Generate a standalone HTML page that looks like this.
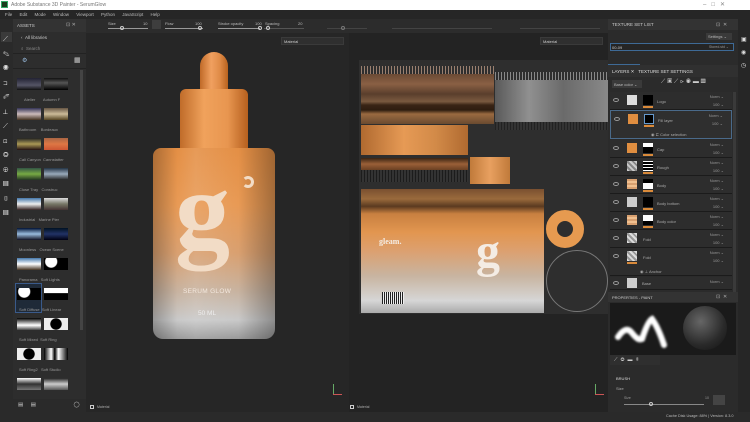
<!DOCTYPE html>
<html><head><meta charset="utf-8"><style>
*{margin:0;padding:0;box-sizing:border-box}
body{width:750px;height:422px;overflow:hidden;background:#1e1e1e;font-family:"Liberation Sans",sans-serif;font-size:5px;color:#bbb;position:relative}
.a{position:absolute}
.t{white-space:nowrap}
.lay{position:absolute;left:610px;width:122px;height:18px;border-bottom:1px solid #1b1b1b;background:#2d2d2d}
.lay .th{position:absolute;left:17px;top:3px;width:10px;height:10px}
.lay .mk{position:absolute;left:33px;top:3px;width:10px;height:10px;background:#000}
.lay .ob{position:absolute;left:33px;top:14px;width:10px;height:2px;background:#d98a3a}
.lay .eye{position:absolute;left:3px;top:6px;width:6px;height:4px;border:1px solid #999;border-radius:50%}
.lay .n{position:absolute;left:47px;top:7px;font-size:4px;color:#aaa}
.lay .nr{position:absolute;right:8px;top:2px;font-size:4px;color:#999}
.lay .nr2{position:absolute;right:8px;top:10px;font-size:4px;color:#999}
.asrow{position:absolute;left:17px;width:60px;height:12px}
.asrow div{position:absolute;top:0;width:24px;height:12px}
.lbl{position:absolute;font-size:4px;color:#999}
</style></head><body>
<!-- title bar -->
<div class="a" style="left:0;top:0;width:750px;height:10px;background:#fff"></div>
<div class="a" style="left:1px;top:1px;width:7px;height:7px;background:#1b3a1b;border:1px solid #3a6"></div>
<div class="a t" style="left:11px;top:2px;color:#777;font-size:5px">Adobe Substance 3D Painter - SerumGlow</div>
<div class="a t" style="left:703px;top:1px;color:#888;font-size:6px">–&nbsp;&nbsp;&nbsp;□&nbsp;&nbsp;&nbsp;✕</div>
<!-- menu -->
<div class="a" style="left:0;top:10px;width:750px;height:9px;background:#262626"></div>
<div class="a t" style="left:5px;top:12px;color:#bbb;font-size:4.5px;word-spacing:6px">File Edit Mode Window Viewport Python JavaScript Help</div>
<!-- toolbar -->
<div class="a" style="left:86px;top:19px;width:664px;height:14px;background:#2c2c2c"></div>
<div class="a" style="left:108px;top:28px;width:40px;height:1px;background:#999"></div>
<div class="a" style="left:120px;top:26px;width:4px;height:4px;border:1px solid #ccc;border-radius:50%"></div>
<div class="a t" style="left:108px;top:21px;font-size:4px">Size</div><div class="a t" style="left:143px;top:21px;font-size:4px">10</div>
<div class="a" style="left:152px;top:20px;width:9px;height:9px;background:#3e3e3e"></div>
<div class="a" style="left:165px;top:28px;width:38px;height:1px;background:#999"></div>
<div class="a" style="left:198px;top:26px;width:4px;height:4px;border:1px solid #ccc;border-radius:50%"></div>
<div class="a t" style="left:165px;top:21px;font-size:4px">Flow</div><div class="a t" style="left:195px;top:21px;font-size:4px">100</div>
<div class="a" style="left:218px;top:28px;width:42px;height:1px;background:#999"></div>
<div class="a" style="left:258px;top:26px;width:4px;height:4px;border:1px solid #ccc;border-radius:50%"></div>
<div class="a t" style="left:218px;top:21px;font-size:4px">Stroke opacity</div><div class="a t" style="left:255px;top:21px;font-size:4px">100</div>
<div class="a" style="left:264px;top:28px;width:40px;height:1px;background:#555"></div>
<div class="a" style="left:266px;top:26px;width:4px;height:4px;border:1px solid #ccc;border-radius:50%"></div>
<div class="a t" style="left:265px;top:21px;font-size:4px">Spacing</div><div class="a t" style="left:298px;top:21px;font-size:4px">20</div>
<div class="a" style="left:327px;top:28px;width:40px;height:1px;background:#444"></div>
<div class="a" style="left:341px;top:26px;width:4px;height:4px;border:1px solid #777;border-radius:50%"></div>
<div class="a" style="left:392px;top:28px;width:100px;height:1px;background:#444"></div>
<div class="a" style="left:520px;top:28px;width:80px;height:1px;background:#444"></div>
<!-- left toolstrip -->
<div class="a" style="left:0;top:19px;width:13px;height:393px;background:#2a2a2a"></div>
<div class="a" style="left:1px;top:32px;width:11px;height:10px;background:#3a3a3a"></div>
<div class="a t" style="left:3px;top:33px;color:#ddd;font-size:7px;line-height:14.5px;width:8px;white-space:normal">⟋ ✎ ◉ ⊐ ✐ ⊥ ⟋ ⊡ ◎ ⊕ ▤ ▯ ▤</div>
<!-- assets panel -->
<div class="a" style="left:13px;top:19px;width:73px;height:393px;background:#2d2d2d"></div>
<div class="a" style="left:13px;top:19px;width:73px;height:13px;background:#333"></div>
<div class="a t" style="left:17px;top:23px;color:#ccc;font-size:4.5px">ASSETS</div>
<div class="a t" style="left:66px;top:22px;color:#aaa;font-size:5px">⊡ ✕</div>
<div class="a t" style="left:21px;top:35px;color:#ccc;font-size:4.5px">‹&nbsp;&nbsp;All libraries</div>
<div class="a t" style="left:21px;top:46px;color:#888;font-size:4.5px">⌕&nbsp; Search</div>
<div class="a" style="left:13px;top:53px;width:73px;height:1px;background:#222"></div>
<div class="a t" style="left:22px;top:57px;color:#9bd;font-size:6px">⚙</div>
<div class="a t" style="left:74px;top:56px;color:#ccc;font-size:7px">▦</div>
<div class="a" style="left:13px;top:68px;width:73px;height:1px;background:#222"></div>
<div class="a" style="left:80px;top:70px;width:3px;height:260px;background:#444"></div>
<div class="asrow" style="top:78px"><div style="left:0;background:linear-gradient(#223,#556 60%,#111)"></div><div style="left:27px;background:linear-gradient(#111,#555 40%,#000)"></div></div>
<div class="lbl t" style="left:24px;top:97px">Atelier&nbsp;&nbsp;&nbsp;&nbsp;&nbsp;&nbsp; Autumn F</div>
<div class="asrow" style="top:108px"><div style="left:0;background:linear-gradient(#335,#cbb 50%,#432)"></div><div style="left:27px;background:linear-gradient(#654,#cb9 50%,#542)"></div></div>
<div class="lbl t" style="left:19px;top:127px">Bathroom&nbsp;&nbsp;&nbsp;&nbsp;Bordeaux</div>
<div class="asrow" style="top:138px"><div style="left:0;background:linear-gradient(#222,#a95 50%,#211)"></div><div style="left:27px;background:linear-gradient(#a64,#d74 50%,#c53)"></div></div>
<div class="lbl t" style="left:19px;top:157px">Cali Canyon&nbsp;&nbsp;Cannstatter</div>
<div class="asrow" style="top:168px"><div style="left:0;background:linear-gradient(#354,#7a4 50%,#232)"></div><div style="left:27px;background:linear-gradient(#234,#9ab 50%,#222)"></div></div>
<div class="lbl t" style="left:19px;top:187px">Close Tray&nbsp;&nbsp;&nbsp;Construc</div>
<div class="asrow" style="top:198px"><div style="left:0;background:linear-gradient(#47a,#eee 50%,#322)"></div><div style="left:27px;background:linear-gradient(#ddd,#776 50%,#433)"></div></div>
<div class="lbl t" style="left:19px;top:217px">Industrial&nbsp;&nbsp;&nbsp;Marine Pier</div>
<div class="asrow" style="top:228px"><div style="left:0;background:linear-gradient(#013,#9bd 50%,#112)"></div><div style="left:27px;background:linear-gradient(#012,#236 50%,#001)"></div></div>
<div class="lbl t" style="left:19px;top:247px">Moonless&nbsp;&nbsp;&nbsp;Ocean Scene</div>
<div class="asrow" style="top:258px"><div style="left:0;background:linear-gradient(#47a,#fff 50%,#432)"></div><div style="left:27px;background:radial-gradient(circle at 30% 30%,#fff 30%,#000 35%)"></div></div>
<div class="lbl t" style="left:19px;top:277px">Panorama&nbsp;&nbsp;&nbsp;Soft Lights</div>
<div class="a" style="left:15px;top:283px;width:27px;height:30px;border:1px solid #3a5a8a;background:#1f2a38"></div>
<div class="asrow" style="top:288px"><div style="left:0;background:radial-gradient(circle at 30% 30%,#fff 30%,#000 35%)"></div><div style="left:27px;background:linear-gradient(#fff 40%,#000 45%)"></div></div>
<div class="lbl t" style="left:19px;top:307px">Soft Diffuse&nbsp;&nbsp;Soft Linear</div>
<div class="asrow" style="top:318px"><div style="left:0;background:linear-gradient(#000,#fff 60%,#444)"></div><div style="left:27px;background:radial-gradient(circle,#000 40%,#eee 45%)"></div></div>
<div class="lbl t" style="left:19px;top:337px">Soft Mixed&nbsp;&nbsp;Soft Ring</div>
<div class="asrow" style="top:348px"><div style="left:0;background:radial-gradient(circle,#000 40%,#eee 45%)"></div><div style="left:27px;background:linear-gradient(90deg,#000,#fff 30%,#000 45%,#fff 60%,#000)"></div></div>
<div class="lbl t" style="left:19px;top:367px">Soft Ring2&nbsp;&nbsp;&nbsp;Soft Studio</div>
<div class="asrow" style="top:378px"><div style="left:0;background:linear-gradient(#fff,#333 50%,#777)"></div><div style="left:27px;background:linear-gradient(#222,#ccc 50%,#555)"></div></div>
<div class="a" style="left:13px;top:399px;width:73px;height:13px;background:#2a2a2a"></div>
<div class="a t" style="left:18px;top:402px;color:#ccc;font-size:5.5px;word-spacing:6px">▤ ▤ &nbsp;&nbsp;&nbsp;&nbsp;◯ ▭ +</div>
<!-- 3D viewport -->
<div class="a" style="left:86px;top:33px;width:263px;height:379px;background:#262626"></div>
<div class="a" style="left:281px;top:37px;width:63px;height:8px;background:#2f2f2f;border:1px solid #3a3a3a"></div>
<div class="a t" style="left:284px;top:39px;font-size:4px;color:#ccc">Material</div>
<!-- bottle -->
<div class="a" style="left:200px;top:52px;width:28px;height:40px;border-radius:14px 14px 0 0;background:linear-gradient(90deg,#c06a28,#f0a060 40%,#e08c48 70%,#b8621e)"></div>
<div class="a" style="left:180px;top:89px;width:68px;height:60px;border-radius:6px 6px 0 0;background:linear-gradient(90deg,#c06c2a,#f0a25c 35%,#e89650 70%,#b6601e)"></div>
<div class="a" style="left:153px;top:148px;width:122px;height:191px;border-radius:8px 8px 10px 10px;background:linear-gradient(90deg,rgba(0,0,0,.25),rgba(255,255,255,0) 20%,rgba(255,255,255,.1) 35%,rgba(0,0,0,0) 70%,rgba(0,0,0,.3)),linear-gradient(#e48f45,#e89a55 30%,#d9a070 55%,#c8b3a0 75%,#c9c9c9 90%,#9a9a9a)"></div>
<div class="a" style="left:175px;top:170px;font-family:'Liberation Serif',serif;font-weight:bold;font-size:110px;line-height:80px;color:#f2dcc6">g</div>
<div class="a" style="left:242px;top:176px;width:12px;height:12px;border-radius:50%;border:3px solid #f2dcc6;border-left-color:transparent"></div>
<div class="a t" style="left:183px;top:288px;font-size:6.5px;color:#f3e8de;letter-spacing:.3px">SERUM GLOW</div>
<div class="a t" style="left:198px;top:310px;font-size:6.5px;color:#eee">50 ML</div>
<div class="a" style="left:333px;top:384px;width:1px;height:10px;background:#6a6"></div>
<div class="a" style="left:333px;top:394px;width:9px;height:1px;background:#c55"></div>
<div class="a" style="left:90px;top:405px;width:4px;height:4px;border:1px solid #ccc"></div>
<div class="a t" style="left:97px;top:405px;font-size:3.5px;color:#aaa">Material</div>
<!-- 2D viewport -->
<div class="a" style="left:349px;top:33px;width:260px;height:379px;background:#232323"></div>
<div class="a" style="left:540px;top:37px;width:63px;height:8px;background:#2f2f2f;border:1px solid #3a3a3a"></div>
<div class="a t" style="left:543px;top:39px;font-size:4px;color:#ccc">Material</div>
<div class="a" style="left:359px;top:60px;width:250px;height:254px;background:#2e2e2e"></div>
<div class="a" style="left:361px;top:66px;width:133px;height:8px;background:repeating-linear-gradient(90deg,#9a8070 0 1px,transparent 1px 3px)"></div>
<div class="a" style="left:361px;top:74px;width:133px;height:50px;background:linear-gradient(#6a4a34,#8a6044 20%,#5a3e2c 40%,#7a5a40 55%,#3a2516 62%,#2e1d10 72%,#9a6a40 80%,#6a4a30)"></div>
<div class="a" style="left:495px;top:72px;width:114px;height:8px;background:repeating-linear-gradient(90deg,#888 0 1px,transparent 1px 3px)"></div>
<div class="a" style="left:495px;top:80px;width:114px;height:42px;background:linear-gradient(90deg,#5a5a5a,#909090 30%,#6a6a6a 60%,#8a8a8a)"></div>
<div class="a" style="left:495px;top:122px;width:114px;height:8px;background:repeating-linear-gradient(90deg,#222 0 1px,#333 1px 3px)"></div>
<div class="a" style="left:361px;top:125px;width:107px;height:30px;background:linear-gradient(90deg,#b06a30,#e69a55 40%,#d28a48 70%,#b06a30)"></div>
<div class="a" style="left:361px;top:158px;width:107px;height:12px;background:linear-gradient(#3a2412,#9a6038 50%,#6a4022)"></div>
<div class="a" style="left:361px;top:170px;width:107px;height:12px;background:repeating-linear-gradient(90deg,#1c1c1c 0 1px,#333 1px 3px)"></div>
<div class="a" style="left:470px;top:157px;width:40px;height:27px;background:linear-gradient(90deg,#c07a3a,#e8a060 50%,#c07a3a)"></div>
<div class="a" style="left:361px;top:189px;width:183px;height:124px;background:linear-gradient(#7a5030,#9a6a3c 8%,#5a3a20 14%,#c88040 20%,#e29650 35%,#dca070 50%,#c8b4a0 70%,#d6d6d6 90%,#aaa)"></div>
<div class="a t" style="left:379px;top:237px;font-family:'Liberation Serif',serif;font-weight:bold;font-size:8px;color:#f4ece4">gleam.</div>
<div class="a" style="left:382px;top:292px;width:22px;height:12px;background:repeating-linear-gradient(90deg,#222 0 1px,#eee 1px 2px)"></div>
<div class="a" style="left:476px;top:232px;font-family:'Liberation Serif',serif;font-weight:bold;font-size:48px;line-height:40px;color:#f4ece4">g</div>
<div class="a" style="left:546px;top:210px;width:38px;height:38px;border-radius:50%;border:11px solid #e69a50;background:#2e2e2e"></div>
<div class="a" style="left:546px;top:250px;width:62px;height:62px;border-radius:50%;border:1px solid #777"></div>
<div class="a" style="left:595px;top:384px;width:1px;height:10px;background:#6a6"></div>
<div class="a" style="left:595px;top:394px;width:9px;height:1px;background:#c55"></div>
<div class="a" style="left:350px;top:405px;width:4px;height:4px;border:1px solid #ccc"></div>
<div class="a t" style="left:357px;top:405px;font-size:3.5px;color:#aaa">Material</div>
<!-- right panel -->
<div class="a" style="left:608px;top:19px;width:130px;height:393px;background:#2b2b2b"></div>
<div class="a" style="left:738px;top:19px;width:12px;height:393px;background:#262626"></div>
<div class="a t" style="left:741px;top:34px;color:#ddd;font-size:6px;line-height:13px;width:8px;white-space:normal">▣ ◉ ◷</div>
<div class="a" style="left:608px;top:19px;width:130px;height:11px;background:#333"></div>
<div class="a t" style="left:612px;top:22px;font-size:4.5px;color:#ccc">TEXTURE SET LIST</div>
<div class="a t" style="left:716px;top:22px;font-size:5px;color:#aaa">⊡&nbsp;&nbsp;✕</div>
<div class="a" style="left:706px;top:33px;width:26px;height:7px;background:#3a3a3a"></div>
<div class="a t" style="left:708px;top:34px;font-size:4px">Settings ⌄</div>
<div class="a" style="left:610px;top:43px;width:124px;height:8px;background:#252525;border:1px solid #3e6a96"></div>
<div class="a t" style="left:612px;top:45px;font-size:4px;color:#ccc">00-09</div>
<div class="a t" style="left:709px;top:45px;font-size:3.5px;color:#999">Stored.std ⌄</div>
<div class="a" style="left:608px;top:64px;height:1px;background:#3e6a96;width:32px"></div>
<div class="a" style="left:608px;top:65px;width:130px;height:12px;background:#303030"></div>
<div class="a t" style="left:612px;top:69px;font-size:4.5px;color:#ddd">LAYERS ✕&nbsp;&nbsp;&nbsp;TEXTURE SET SETTINGS</div>
<div class="a" style="left:612px;top:80px;width:30px;height:8px;background:#3a3a3a"></div>
<div class="a t" style="left:614px;top:82px;font-size:4px">Base color ⌄</div>
<div class="a t" style="left:661px;top:79px;font-size:6px;color:#ccc;letter-spacing:2px">⟋▣⟋⊳◉▬▥</div>
<div class="lay" style="top:92px"><div class="eye"></div><div class="th" style="background:#ddd"></div><div class="mk"></div><div class="ob"></div><div class="n">Logo</div><div class="nr">Norm ⌄</div><div class="nr2">100 ⌄</div></div>
<div class="lay" style="top:110px;height:29px;border:1px solid #4a6a8a;background:#2f2f2f"><div class="eye"></div><div class="th" style="background:#e08e40"></div><div class="mk" style="border:1px solid #6699cc"></div><div class="ob"></div><div class="n">Fill layer</div><div class="nr">Norm ⌄</div><div class="nr2">100 ⌄</div><div class="n" style="left:40px;top:21px">◉ ⊏ Color selection</div></div>
<div class="lay" style="top:140px"><div class="eye"></div><div class="th" style="background:#e08e40"></div><div class="mk" style="background:linear-gradient(#fff 40%,#000 40%)"></div><div class="ob"></div><div class="n">Cap</div><div class="nr">Norm ⌄</div><div class="nr2">100 ⌄</div></div>
<div class="lay" style="top:158px"><div class="eye"></div><div class="th" style="background:repeating-linear-gradient(45deg,#ccc 0 2px,#888 2px 4px)"></div><div class="mk" style="background:repeating-linear-gradient(#fff 0 1px,#000 1px 3px)"></div><div class="ob"></div><div class="n">Rough</div><div class="nr">Norm ⌄</div><div class="nr2">100 ⌄</div></div>
<div class="lay" style="top:176px"><div class="eye"></div><div class="th" style="background:repeating-linear-gradient(#d8a070 0 2px,#f0c090 2px 4px)"></div><div class="mk" style="background:linear-gradient(#000 40%,#fff 40%)"></div><div class="ob"></div><div class="n">Body</div><div class="nr">Norm ⌄</div><div class="nr2">100 ⌄</div></div>
<div class="lay" style="top:194px"><div class="eye"></div><div class="th" style="background:#ccc"></div><div class="mk"></div><div class="ob"></div><div class="n">Body bottom</div><div class="nr">Norm ⌄</div><div class="nr2">100 ⌄</div></div>
<div class="lay" style="top:212px"><div class="eye"></div><div class="th" style="background:repeating-linear-gradient(#d8a070 0 2px,#f0c090 2px 4px)"></div><div class="mk" style="background:linear-gradient(#fff 60%,#000 60%)"></div><div class="ob"></div><div class="n">Body color</div><div class="nr">Norm ⌄</div><div class="nr2">100 ⌄</div></div>
<div class="lay" style="top:230px"><div class="eye"></div><div class="th" style="background:repeating-linear-gradient(45deg,#ddd 0 2px,#999 2px 4px)"></div><div class="n" style="left:33px">Fold</div><div class="nr">Norm ⌄</div><div class="nr2">100 ⌄</div></div>
<div class="lay" style="top:248px;height:28px"><div class="eye"></div><div class="th" style="background:repeating-linear-gradient(45deg,#ddd 0 2px,#999 2px 4px)"></div><div class="ob" style="left:17px"></div><div class="n" style="left:33px">Fold</div><div class="nr">Norm ⌄</div><div class="nr2">100 ⌄</div><div class="n" style="left:30px;top:21px">◉ ⊥ Anchor</div></div>
<div class="lay" style="top:277px;height:13px"><div class="eye" style="top:4px"></div><div class="th" style="background:#ccc;top:1px"></div><div class="n" style="left:32px;top:4px">Base</div><div class="nr">Norm ⌄</div></div>
<div class="a" style="left:733px;top:92px;width:3px;height:200px;background:#3a3a3a"></div>
<!-- properties -->
<div class="a" style="left:608px;top:292px;width:130px;height:10px;background:#333"></div>
<div class="a t" style="left:612px;top:295px;font-size:4px;color:#ccc">PROPERTIES - PAINT</div>
<div class="a t" style="left:716px;top:294px;font-size:5px;color:#aaa">⊡&nbsp;&nbsp;✕</div>
<div class="a" style="left:610px;top:303px;width:126px;height:52px;background:#1a1a1a"></div>
<svg class="a" style="left:612px;top:305px" width="60" height="50"><path d="M6 32 Q14 20 20 28 T30 34 Q36 16 40 14 Q46 22 52 40" stroke="#fff" stroke-width="6" fill="none" stroke-linecap="round" style="filter:blur(1px)"/></svg>
<div class="a" style="left:683px;top:306px;width:44px;height:44px;border-radius:50%;background:radial-gradient(circle at 40% 35%,#666,#2a2a2a 60%,#111)"></div>
<div class="a" style="left:610px;top:355px;width:50px;height:10px;background:#2f2f2f"></div>
<div class="a t" style="left:614px;top:357px;font-size:5px;color:#ccc;letter-spacing:3px">⟋◎▬▯</div>
<div class="a t" style="left:616px;top:376px;font-size:4px;color:#ddd">BRUSH</div>
<div class="a t" style="left:616px;top:386px;font-size:4px;color:#aaa">Size</div>
<div class="a t" style="left:624px;top:396px;font-size:3.5px;color:#999">Size</div>
<div class="a t" style="left:705px;top:396px;font-size:3.5px;color:#999">10</div>
<div class="a" style="left:624px;top:404px;width:80px;height:1px;background:#888"></div>
<div class="a" style="left:649px;top:402px;width:4px;height:4px;border:1px solid #ccc;border-radius:50%"></div>
<div class="a" style="left:713px;top:395px;width:12px;height:10px;background:#444"></div>
<!-- status -->
<div class="a" style="left:0;top:412px;width:750px;height:10px;background:#2a2a2a"></div>
<div class="a t" style="left:666px;top:414px;font-size:3.8px;color:#bbb">Cache Disk Usage: 88% | Version: 8.3.0</div>
</body></html>
